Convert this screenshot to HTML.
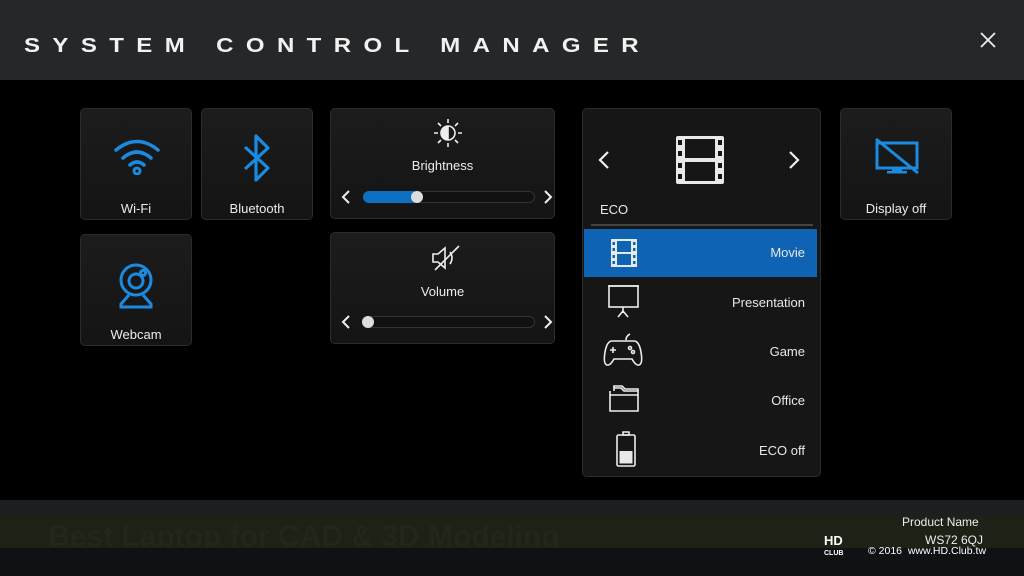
<!DOCTYPE html>
<html><head><meta charset="utf-8"><style>
*{margin:0;padding:0;box-sizing:border-box}
body{width:1024px;height:576px;background:#000;position:relative;overflow:hidden;font-family:"Liberation Sans",sans-serif;color:#e8e8e8}
.hdr{position:absolute;left:0;top:0;width:1024px;height:80px;background:#252728}
.title{position:absolute;left:24px;top:36px;font-size:24px;letter-spacing:12.4px;color:#f2f2f2;font-weight:bold;transform:scaleY(0.85);transform-origin:left top;white-space:nowrap;font-family:"Liberation Sans",sans-serif;line-height:24px}
.x{position:absolute;left:978px;top:30px;width:20px;height:20px}
.tile{position:absolute;background:linear-gradient(#1c1c1c,#141414);border:1px solid #2c2c2c;border-radius:5px}
.lbl{position:absolute;width:100%;text-align:center;font-size:13px;color:#ececec}
.bot1{position:absolute;left:0;top:500px;width:1024px;height:16px;background:#1c1f20}
.bot2{position:absolute;left:0;top:516px;width:1024px;height:32px;background:#1d2116}
.bot2 span{position:absolute;left:48px;top:4px;font-size:30px;font-weight:bold;color:#23271b}
.task{position:absolute;left:0;top:548px;width:1024px;height:28px;background:#0f1214}
.row{position:absolute;left:584px;width:233px;height:48px}
.row .t{position:absolute;right:12px;top:16px;font-size:13px}
.row svg{position:absolute;left:20px;top:6px}
</style></head><body>
<div class="hdr"></div>
<div class="title">SYSTEM CONTROL MANAGER</div>
<svg class="x" viewBox="0 0 20 20"><path d="M3 3L17 17M17 3L3 17" stroke="#eee" stroke-width="1.8"/></svg>

<div class="bot1"></div>
<div class="bot2"><span>Best Laptop for CAD &amp; 3D Modeling</span></div>
<div class="task"></div>

<div class="tile" style="left:80px;top:108px;width:112px;height:112px">
<svg style="position:absolute;left:33px;top:28px" width="46" height="38" viewBox="0 0 46 38"><g fill="none" stroke="#1a8be0" stroke-width="3.5" stroke-linecap="round"><path d="M2 13Q23-4 44 13"/><path d="M9 21Q23 9 37 21"/><path d="M16 28Q23 22 30 28"/></g><circle cx="23" cy="34" r="3" fill="none" stroke="#1a8be0" stroke-width="3"/></svg>
<div class="lbl" style="top:92px">Wi-Fi</div></div>
<div class="tile" style="left:201px;top:108px;width:112px;height:112px">
<svg style="position:absolute;left:40px;top:25px" width="30" height="48" viewBox="0 0 30 48"><path d="M3 13L26 34L14 46V2L26 14L3 35" fill="none" stroke="#1a8be0" stroke-width="3.2" stroke-linejoin="round"/></svg>
<div class="lbl" style="top:92px">Bluetooth</div></div>
<div class="tile" style="left:80px;top:234px;width:112px;height:112px">
<svg style="position:absolute;left:36px;top:28px" width="40" height="46" viewBox="0 0 40 46"><g fill="none" stroke="#1a8be0" stroke-width="3"><circle cx="19" cy="17" r="15"/><circle cx="19" cy="18" r="7"/><circle cx="26" cy="10" r="2.5"/><path d="M12 32L4 41V44H34V41L26 32"/></g></svg>
<div class="lbl" style="top:92px">Webcam</div></div>

<div class="tile" style="left:330px;top:108px;width:225px;height:111px">
<svg style="position:absolute;left:102px;top:9px" width="30" height="30" viewBox="0 0 30 30"><g stroke="#eee" stroke-width="1.6" fill="none"><circle cx="15" cy="15" r="7"/><path d="M15 8V22" /><path d="M15 1V5M15 25V29M1 15H5M25 15H29M5 5L8 8M22 22L25 25M25 5L22 8M8 22L5 25"/></g><path d="M15 8A7 7 0 0 0 15 22Z" fill="#eee"/></svg>
<div class="lbl" style="top:49px">Brightness</div>
<svg style="position:absolute;left:8px;top:80px" width="14" height="16" viewBox="0 0 14 16"><path d="M10 2L4 8L10 14" stroke="#eee" stroke-width="2" fill="none"/></svg>
<div style="position:absolute;left:32px;top:82px;width:172px;height:12px;border:1px solid #333;border-radius:6px;background:#111"></div>
<div style="position:absolute;left:32px;top:82px;width:56px;height:12px;border-radius:6px;background:#0e70c4"></div>
<div style="position:absolute;left:80px;top:82px;width:12px;height:12px;border-radius:6px;background:#ddd"></div>
<svg style="position:absolute;left:210px;top:80px" width="14" height="16" viewBox="0 0 14 16"><path d="M4 2L10 8L4 14" stroke="#eee" stroke-width="2" fill="none"/></svg>
</div>
<div class="tile" style="left:330px;top:232px;width:225px;height:112px">
<svg style="position:absolute;left:100px;top:12px" width="30" height="26" viewBox="0 0 30 26"><g stroke="#eee" stroke-width="1.6" fill="none"><path d="M2 9H7L14 3V23L7 17H2Z"/><path d="M19 7Q23 13 19 19"/><path d="M4 25L28 1"/></g></svg>
<div class="lbl" style="top:51px">Volume</div>
<svg style="position:absolute;left:8px;top:81px" width="14" height="16" viewBox="0 0 14 16"><path d="M10 2L4 8L10 14" stroke="#eee" stroke-width="2" fill="none"/></svg>
<div style="position:absolute;left:32px;top:83px;width:172px;height:12px;border:1px solid #333;border-radius:6px;background:#111"></div>
<div style="position:absolute;left:31px;top:83px;width:12px;height:12px;border-radius:6px;background:#ddd"></div>
<svg style="position:absolute;left:210px;top:81px" width="14" height="16" viewBox="0 0 14 16"><path d="M4 2L10 8L4 14" stroke="#eee" stroke-width="2" fill="none"/></svg>
</div>

<div class="tile" style="left:582px;top:108px;width:239px;height:369px;background:#161616"></div>
<svg style="position:absolute;left:597px;top:150px" width="14" height="20" viewBox="0 0 14 20"><path d="M11 2L3 10L11 18" stroke="#eee" stroke-width="2.2" fill="none"/></svg>
<svg style="position:absolute;left:787px;top:150px" width="14" height="20" viewBox="0 0 14 20"><path d="M3 2L11 10L3 18" stroke="#eee" stroke-width="2.2" fill="none"/></svg>
<svg style="position:absolute;left:675px;top:135px" width="50" height="50" viewBox="0 0 50 50"><rect x="1" y="1" width="48" height="48" rx="2" fill="#e8e8e8"/><rect x="10" y="4" width="30" height="19" fill="#161616"/><rect x="10" y="27" width="30" height="19" fill="#161616"/><g fill="#161616"><rect x="3" y="5" width="4" height="5"/><rect x="3" y="16" width="4" height="5"/><rect x="3" y="28" width="4" height="5"/><rect x="3" y="39" width="4" height="5"/><rect x="43" y="5" width="4" height="5"/><rect x="43" y="16" width="4" height="5"/><rect x="43" y="28" width="4" height="5"/><rect x="43" y="39" width="4" height="5"/></g></svg>
<div style="position:absolute;left:600px;top:202px;font-size:13px">ECO</div>
<div style="position:absolute;left:591px;top:224px;width:222px;height:2px;background:#444"></div>
<div class="row" style="top:229px;background:#0e63b4"><svg width="28" height="30" viewBox="0 0 28 30" style="left:26px;top:9px"><rect x="1" y="1" width="26" height="28" fill="#e8e8e8"/><rect x="7" y="3" width="14" height="11" fill="#0e63b4"/><rect x="7" y="16" width="14" height="11" fill="#0e63b4"/><g fill="#0e63b4"><rect x="2.5" y="4" width="2.5" height="3"/><rect x="2.5" y="10" width="2.5" height="3"/><rect x="2.5" y="17" width="2.5" height="3"/><rect x="2.5" y="23" width="2.5" height="3"/><rect x="23" y="4" width="2.5" height="3"/><rect x="23" y="10" width="2.5" height="3"/><rect x="23" y="17" width="2.5" height="3"/><rect x="23" y="23" width="2.5" height="3"/></g></svg><span class="t">Movie</span></div>
<div class="row" style="top:279px"><svg width="36" height="36" viewBox="0 0 36 36" style="left:22px;top:4px"><g stroke="#eee" stroke-width="1.6" fill="none"><path d="M2 3H33"/><rect x="3" y="3" width="29" height="21"/><path d="M17 24V30M17 28L12 34M17 28L22 34"/></g></svg><span class="t">Presentation</span></div>
<div class="row" style="top:328px"><svg width="42" height="36" viewBox="0 0 42 36" style="left:18px;top:4px"><g stroke="#eee" stroke-width="1.6" fill="none"><path d="M24 8Q24 4 28 2"/><path d="M10 9H32Q37 9 39 20Q41 32 37 33Q34 34 30 27H12Q8 34 5 33Q1 32 3 20Q5 9 10 9Z"/><path d="M11 15V21M8 18H14"/><circle cx="28" cy="16" r="1.5"/><circle cx="31" cy="20" r="1.5"/></g></svg><span class="t">Game</span></div>
<div class="row" style="top:377px"><svg width="34" height="32" viewBox="0 0 34 32" style="left:24px;top:6px"><g stroke="#eee" stroke-width="1.6" fill="none"><path d="M2 8V28H30V8H16L13 5H6V8"/><path d="M6 5V3H14L17 6H30V8"/><path d="M2 12H30"/></g></svg><span class="t">Office</span></div>
<div class="row" style="top:427px"><svg width="24" height="36" viewBox="0 0 24 36" style="left:30px;top:4px"><g stroke="#eee" stroke-width="1.6" fill="none"><rect x="3" y="4" width="18" height="31" rx="1.5"/><path d="M9 1H15V4H9Z"/></g><rect x="5.5" y="20" width="13" height="12.5" fill="#e8e8e8"/></svg><span class="t">ECO off</span></div>

<div class="tile" style="left:840px;top:108px;width:112px;height:112px">
<svg style="position:absolute;left:33px;top:28px" width="46" height="38" viewBox="0 0 46 38"><g stroke="#1a8be0" stroke-width="3" fill="none"><rect x="3" y="6" width="40" height="25"/><path d="M2 2L44 36"/></g><rect x="18" y="31" width="10" height="3" fill="#1a8be0"/><rect x="13" y="34" width="20" height="2.5" fill="#1a8be0"/></svg>
<div class="lbl" style="top:92px">Display off</div></div>

<div style="position:absolute;left:902px;top:515px;font-size:12px;color:#eee">Product Name</div>
<div style="position:absolute;left:925px;top:533px;font-size:12px;color:#eee">WS72 6QJ</div>
<div style="position:absolute;left:824px;top:536px;font-size:13px;font-weight:bold;color:#fff;line-height:10px">HD<br><span style="font-size:7px">CLUB</span></div>
<div style="position:absolute;left:868px;top:545px;font-size:10.5px;color:#fff">© 2016&nbsp; www.HD.Club.tw</div>
</body></html>
